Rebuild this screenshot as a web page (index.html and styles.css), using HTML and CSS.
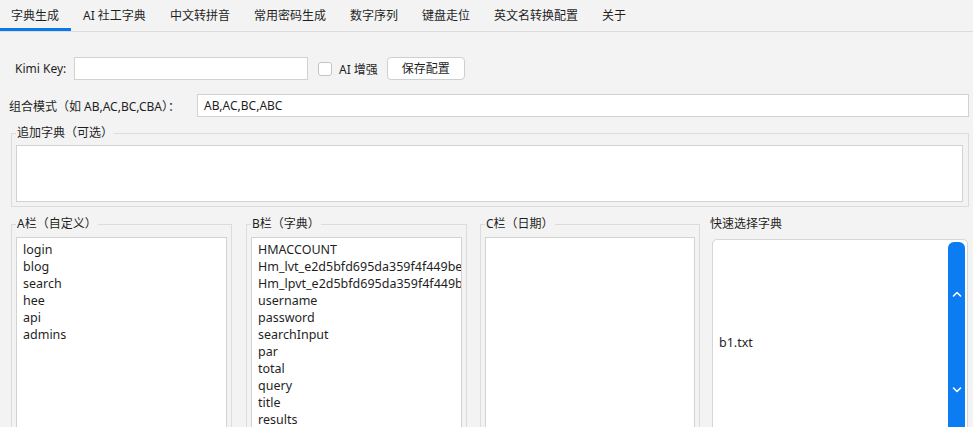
FILE: index.html
```html
<!DOCTYPE html>
<html lang="zh-CN">
<head>
<meta charset="utf-8">
<title>字典生成</title>
<link rel="stylesheet" href="styles.css">
</head>
<body>
<div class="tabs">
  <div class="tab active">字典生成</div>
  <div class="tab">AI 社工字典</div>
  <div class="tab">中文转拼音</div>
  <div class="tab">常用密码生成</div>
  <div class="tab">数字序列</div>
  <div class="tab">键盘走位</div>
  <div class="tab">英文名转换配置</div>
  <div class="tab">关于</div>
</div>
<div class="content">
  <div class="row row-key">
    <span class="lbl-key">Kimi Key:</span>
    <div class="inp inp-key"></div>
    <span class="chk"><span class="box"></span>AI 增强</span>
    <div class="btn">保存配置</div>
  </div>
  <div class="row row-mode">
    <span class="lbl-mode">组合模式（如 AB,AC,BC,CBA）：</span>
    <div class="inp inp-mode">AB,AC,BC,ABC</div>
  </div>
  <fieldset class="group group-extra">
    <legend>追加字典（可选）</legend>
    <div class="area"></div>
  </fieldset>
  <div class="cols">
    <fieldset class="group col">
      <legend>A栏（自定义）</legend>
      <div class="list">
        <div class="item">login</div>
        <div class="item">blog</div>
        <div class="item">search</div>
        <div class="item">hee</div>
        <div class="item">api</div>
        <div class="item">admins</div>
      </div>
    </fieldset>
    <fieldset class="group col">
      <legend>B栏（字典）</legend>
      <div class="list">
        <div class="item">HMACCOUNT</div>
        <div class="item">Hm_lvt_e2d5bfd695da359f4f449be9b9</div>
        <div class="item">Hm_lpvt_e2d5bfd695da359f4f449be9b9</div>
        <div class="item">username</div>
        <div class="item">password</div>
        <div class="item">searchInput</div>
        <div class="item">par</div>
        <div class="item">total</div>
        <div class="item">query</div>
        <div class="item">title</div>
        <div class="item">results</div>
      </div>
    </fieldset>
    <fieldset class="group col col-c">
      <legend>C栏（日期）</legend>
      <div class="list"></div>
    </fieldset>
    <div class="quick">
      <div class="quick-title">快速选择字典</div>
      <div class="quick-box">
        <div class="quick-item">b1.txt</div>
        <div class="scroll">
          <svg class="arrow" width="10" height="6" viewBox="0 0 10 6"><path d="M1.5 5 L5 1.5 L8.5 5" fill="none" stroke="#fff" stroke-width="1.6" stroke-linecap="round" stroke-linejoin="round"/></svg>
          <svg class="arrow" width="10" height="6" viewBox="0 0 10 6"><path d="M1.5 1 L5 4.5 L8.5 1" fill="none" stroke="#fff" stroke-width="1.6" stroke-linecap="round" stroke-linejoin="round"/></svg>
        </div>
      </div>
    </div>
  </div>
</div>
</body>
</html>
```
FILE: styles.css
```css
html, body {
  margin: 0;
  padding: 0;
  background: #f3f3f3;
  overflow: hidden;
}
body {
  width: 973px;
  height: 427px;
  font-family: "Noto Sans", "Noto Sans CJK SC", sans-serif;
  font-size: 12px;
  color: #1f1f1f;
}
.tabs {
  display: flex;
  height: 31px;
  border-bottom: 1px solid #dcdcdc;
  margin-left: -1px;
}
.tab {
  padding: 0 12px;
  height: 28px;
  line-height: 31px;
  border-bottom: 3px solid transparent;
  white-space: nowrap;
}
.tab.active {
  border-bottom-color: #0a78e6;
}
.content {
  display: flex;
  flex-direction: column;
}
.row {
  display: flex;
  align-items: center;
  height: 23px;
}
.row-key {
  margin-top: 25px;
}
.lbl-key {
  margin-left: 15px;
  width: 59px;
}
.inp {
  box-sizing: border-box;
  height: 23px;
  background: #fff;
  border: 1px solid #d2d2d2;
  line-height: 21px;
  padding: 0 6px;
}
.inp-key {
  width: 234px;
}
.chk {
  display: flex;
  align-items: center;
  margin-left: 10px;
  gap: 7px;
}
.box {
  box-sizing: border-box;
  width: 14px;
  height: 14px;
  border: 1px solid #c4c4c4;
  border-radius: 3px;
  background: #fff;
}
.btn {
  box-sizing: border-box;
  margin-left: 9px;
  width: 78px;
  height: 23px;
  line-height: 21px;
  text-align: center;
  background: #fff;
  border: 1px solid #cfcfcf;
  border-radius: 4px;
}
.row-mode {
  margin-top: 14px;
}
.lbl-mode {
  margin-left: 9px;
  width: 188px;
  white-space: nowrap;
}
.inp-mode {
  flex: 1;
  margin-right: 4px;
}
.group {
  box-sizing: border-box;
  margin: 0;
  border: 1px solid #dcdcdc;
  padding: 4px 5px 4px 4px;
  min-width: 0;
}
.group legend {
  padding: 0 1px;
  line-height: 16px;
}
.group-extra {
  margin: 8px 4px 0 11px;
}
.area {
  box-sizing: border-box;
  height: 57px;
  background: #fff;
  border: 1px solid #d2d2d2;
}
.cols {
  display: flex;
  margin-top: 9px;
  margin-left: 11px;
}
.col {
  width: 221px;
  height: 240px;
  margin-right: 14px;
  padding: 5px 4px 0 4px;
}
.col-c {
  width: 220px;
  margin-left: -1px;
  margin-right: 10px;
}
.list {
  box-sizing: border-box;
  height: 220px;
  background: #fff;
  border: 1px solid #d2d2d2;
  padding: 3px 0 0 6px;
  overflow: hidden;
  font-size: 12.5px;
}
.item {
  line-height: 17px;
  white-space: nowrap;
}
.quick {
  width: 258px;
  display: flex;
  flex-direction: column;
}
.quick-title {
  line-height: 16px;
  margin-top: 0;
}
.quick-box {
  box-sizing: border-box;
  margin-top: 7px;
  margin-left: 2px;
  height: 204px;
  background: #fff;
  border: 1px solid #d6d6d6;
  border-radius: 5px;
  display: flex;
  align-items: center;
  padding: 2px 2px 0 6px;
}
.quick-item {
  flex: 1;
  font-size: 12.5px;
  line-height: 17px;
}
.scroll {
  align-self: stretch;
  width: 17px;
  background: #0b7cf2;
  border-radius: 6px;
  display: flex;
  flex-direction: column;
  align-items: center;
  justify-content: center;
  gap: 90px;
}
.arrow {
  display: block;
}
```
